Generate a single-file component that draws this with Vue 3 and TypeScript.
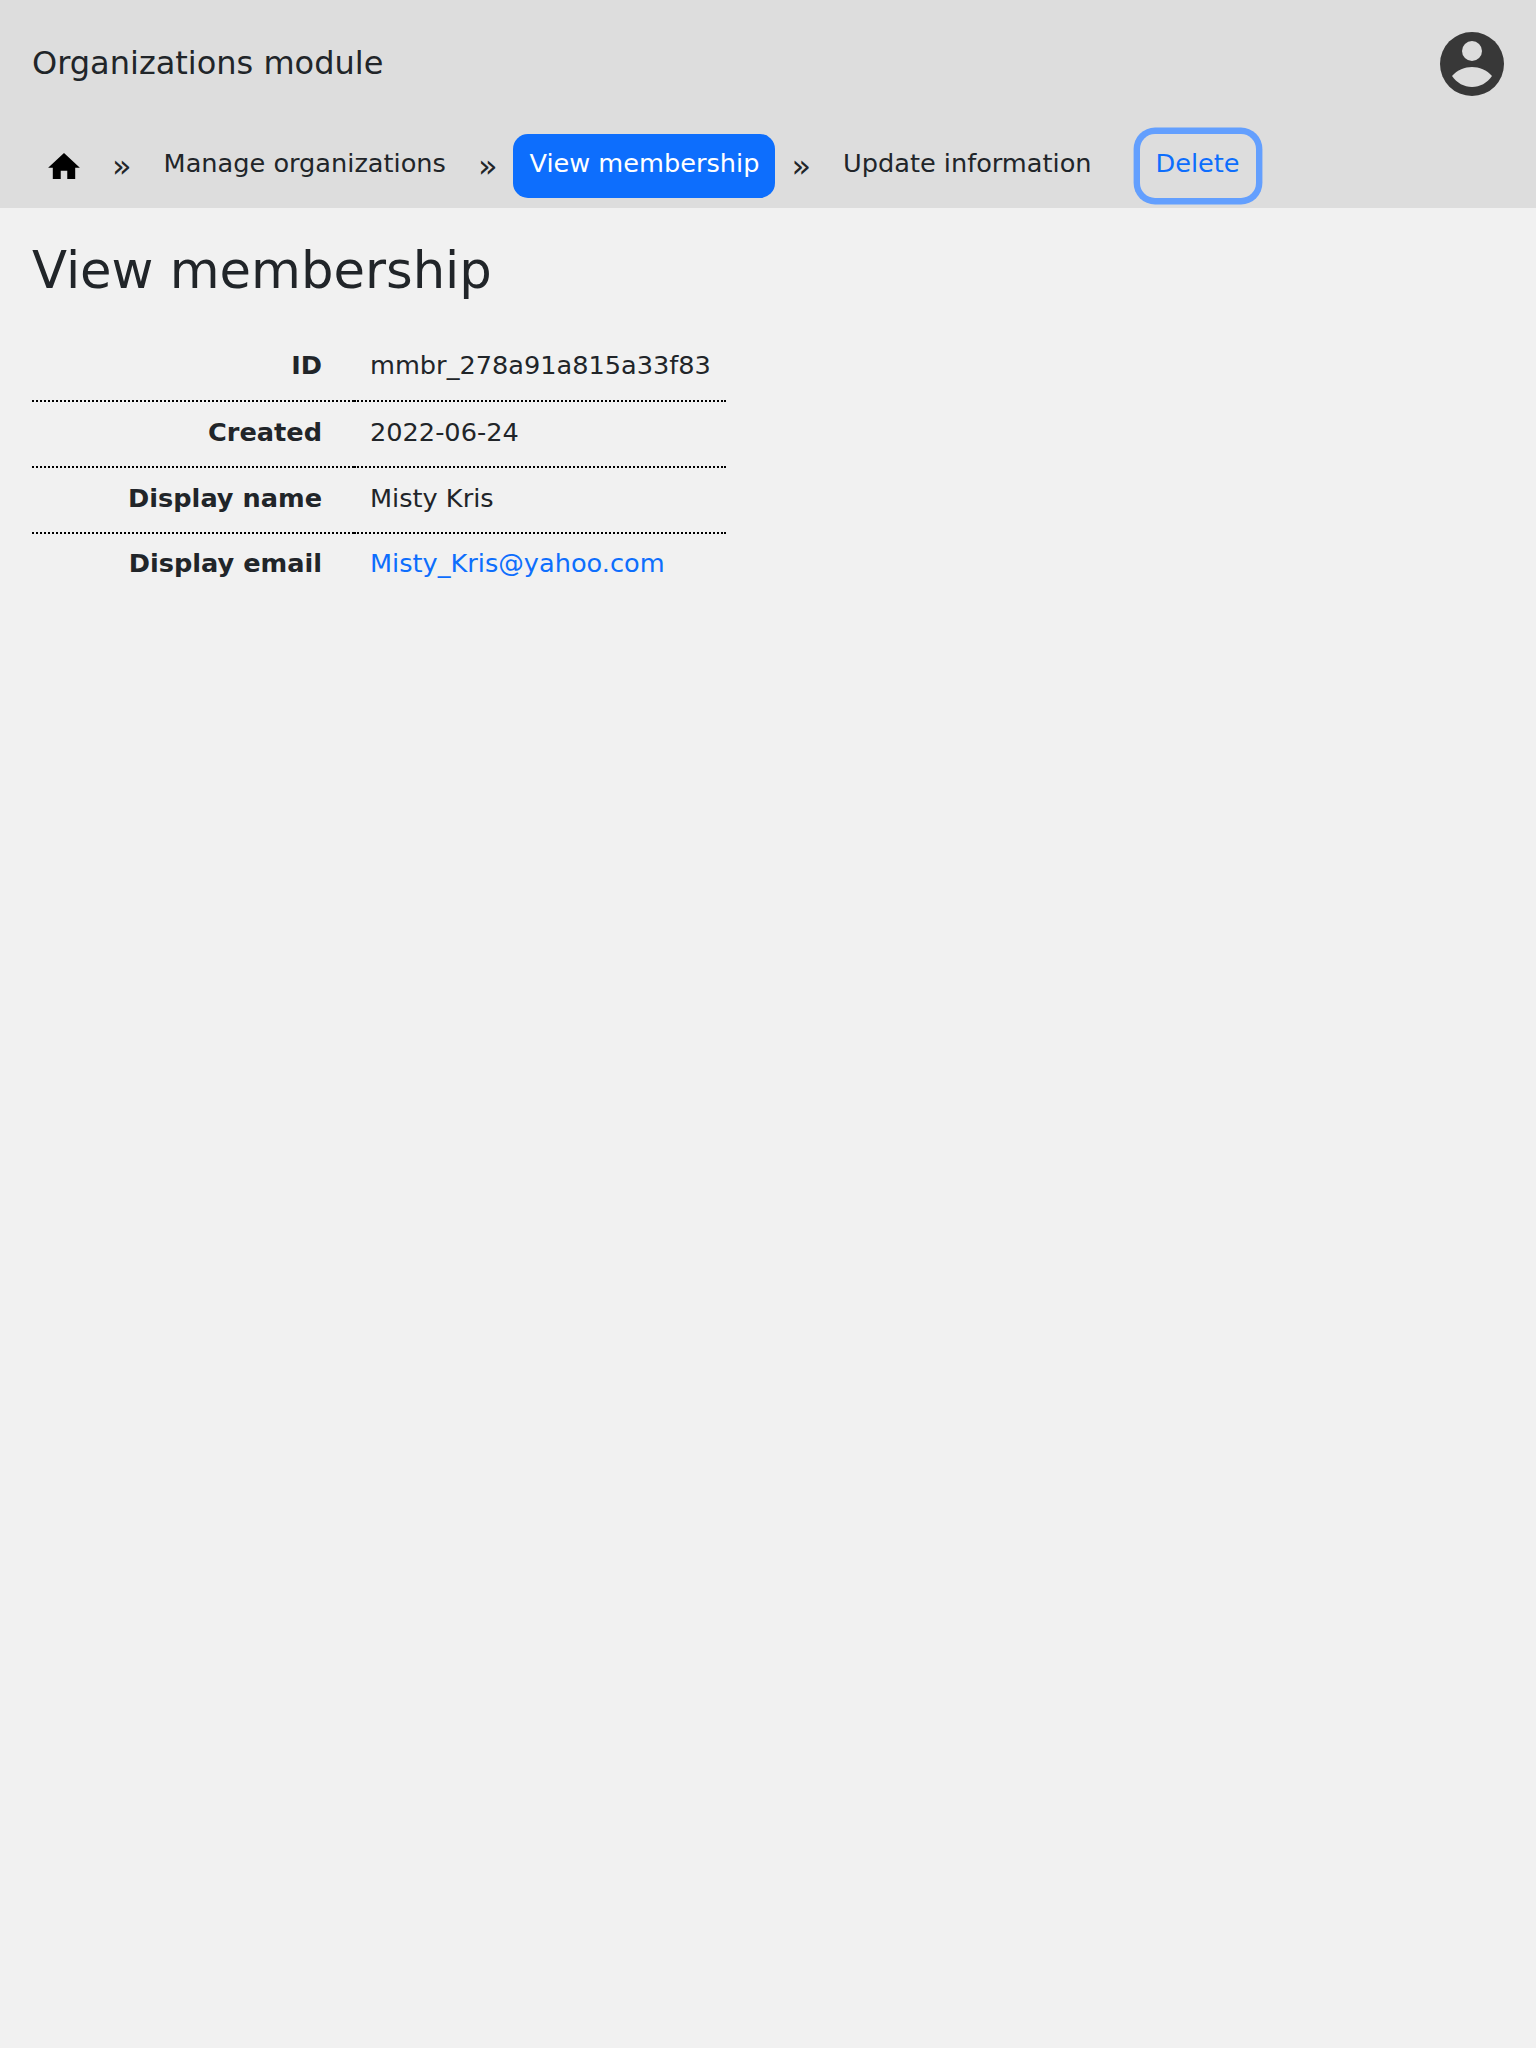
<script setup lang="ts">
interface Crumb {
  label: string
  active?: boolean
}

const crumbs: Crumb[] = [
  { label: 'Manage organizations' },
  { label: 'View membership', active: true },
  { label: 'Update information' }
]

const rows = [
  { label: 'ID', value: 'mmbr_278a91a815a33f83' },
  { label: 'Created', value: '2022-06-24' },
  { label: 'Display name', value: 'Misty Kris' },
  { label: 'Display email', value: 'Misty_Kris@yahoo.com', link: true }
]
</script>

<template>
  <div class="page">
    <header class="header">
      <div class="top-row">
        <span class="module">Organizations module</span>
        <svg class="avatar" viewBox="0 0 64 64">
          <circle cx="32" cy="32" r="32" fill="#383838" />
          <circle cx="32" cy="19" r="10" fill="#ddd" />
          <path d="M12 44 C17 38 25 35 32 35 C39 35 47 38 52 44 C47 51 40 55 32 55 C24 55 17 51 12 44 Z" fill="#ddd" />
        </svg>
      </div>
      <nav class="crumbs">
        <a class="btn home" href="#">
          <svg class="home-icon" viewBox="0 0 34 30">
            <path d="M17 1 L34 17 H29 V29 H20.5 V20 H13.5 V29 H5 V17 H0 Z" fill="#000" />
          </svg>
        </a>
        <template v-for="crumb in crumbs" :key="crumb.label">
          <span class="sep">»</span>
          <a class="btn" :class="{ active: crumb.active }" href="#">{{ crumb.label }}</a>
        </template>
        <a class="btn delete" href="#">Delete</a>
      </nav>
    </header>

    <main class="content">
      <h1 class="title">View membership</h1>
      <table class="details">
        <tbody>
          <tr v-for="row in rows" :key="row.label">
            <th>{{ row.label }}</th>
            <td>
              <a v-if="row.link" href="#">{{ row.value }}</a>
              <template v-else>{{ row.value }}</template>
            </td>
          </tr>
        </tbody>
      </table>
    </main>
  </div>
</template>

<style>
html,
body {
  margin: 0;
  background: #f1f1f1;
}
</style>

<style scoped>
.page {
  min-height: 2048px;
  background: #f1f1f1;
  color: #212529;
  font-family: "DejaVu Sans", sans-serif;
  font-size: 25.6px;
  line-height: 38.4px;
}

.header {
  height: 208px;
  box-sizing: border-box;
  background: #ddd;
  padding: 31px 32px 0 32px;
}

.top-row {
  display: flex;
  align-items: center;
  justify-content: space-between;
  height: 65px;
  margin-bottom: 38px;
}

.module {
  font-size: 32px;
}

.avatar {
  width: 64px;
  height: 64px;
}

.crumbs {
  display: flex;
  align-items: center;
  height: 64px;
}

.btn {
  display: block;
  box-sizing: border-box;
  height: 64px;
  padding: 10px 16px 15px;
  border-radius: 15px;
  color: #212529;
  text-decoration: none;
  white-space: nowrap;
}

.btn.active {
  background: #0d6efd;
  color: #fff;
}

.home {
  width: 64px;
  padding-top: 18px;
}

.home-icon {
  display: block;
  width: 32px;
  height: 28px;
}

.sep {
  width: 51.6px;
  text-align: center;
  font-size: 32px;
}

.delete {
  margin-left: 32px;
  color: #0d6efd;
  box-shadow: 0 0 0 6.4px #639ffe;
}

.content {
  padding: 0 32px;
}

.title {
  margin: 0;
  padding-top: 33px;
  font-size: 51.2px;
  font-weight: 400;
  line-height: 58px;
}

.details {
  margin-top: 36px;
  border-collapse: collapse;
}

.details th,
.details td {
  height: 66px;
  box-sizing: border-box;
  padding: 0 15px 4.6px 16px;
  border-bottom: 2px dotted #000;
  font-weight: 400;
  text-align: left;
}

.details tr:last-child th,
.details tr:last-child td {
  border-bottom: 0;
  padding-bottom: 6px;
}

.details th {
  width: 322px;
  padding-right: 32px;
  font-weight: 700;
  text-align: right;
}

.details a {
  color: #0d6efd;
  text-decoration: none;
}
</style>
